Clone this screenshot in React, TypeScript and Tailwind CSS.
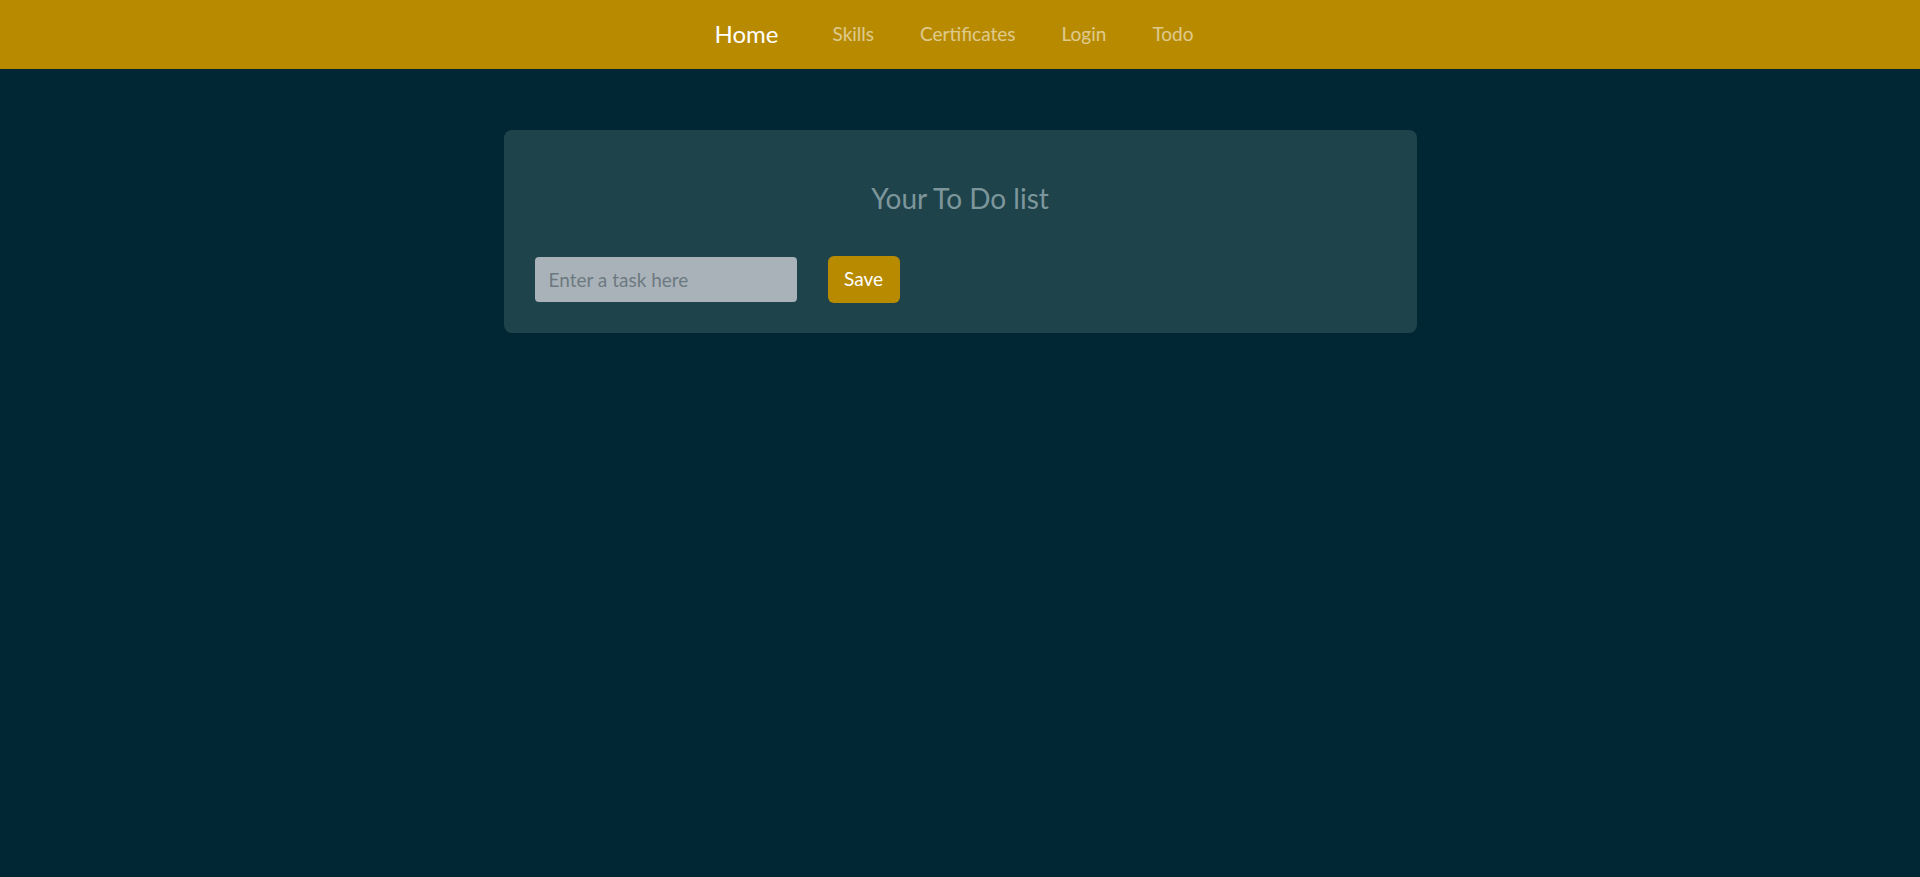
const links = ["Skills", "Certificates", "Login", "Todo"]

export default function App() {
  return (
    <div className="min-h-screen bg-[#002733] font-['Lato',sans-serif]">
      <nav className="h-[69px] bg-[#b78a00] flex items-center justify-center pl-[11px]">
        <a className="text-[24px] text-white mr-[31px] pb-[2px] cursor-pointer">Home</a>
        {links.map(l => (
          <a key={l} className="px-[23px] text-[19px] text-white/55 cursor-pointer">
            {l}
          </a>
        ))}
      </nav>

      <div className="pt-[61px]">
        <div className="mx-auto w-[913px] h-[203px] rounded-lg bg-[#1f434b] px-[31px] pt-[48px]">
          <h2 className="text-center text-[28px] leading-[40px] text-[#7d969b]">Your To Do list</h2>
          <div className="mt-[38px] flex items-center gap-[31px]">
            <input
              placeholder="Enter a task here"
              className="w-[262px] h-[45px] rounded bg-[#aab2b9] px-[14px] text-[19px] text-[#33414a] placeholder:text-[#6c7a80] outline-none"
            />
            <button className="w-[72px] h-[47px] rounded-md bg-[#b78a00] text-[19px] text-white">Save</button>
          </div>
        </div>
      </div>
    </div>
  )
}
